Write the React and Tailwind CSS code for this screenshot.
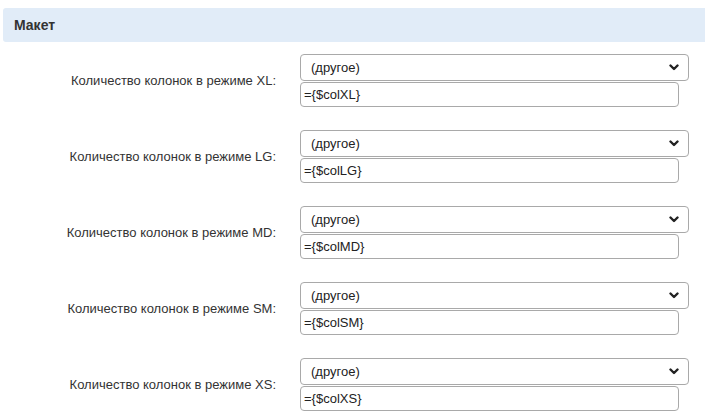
import React from "react";

const rows = ["XL", "LG", "MD", "SM", "XS"];

function Chevron() {
  return (
    <svg width="10" height="7" viewBox="0 0 10 7" className="absolute right-[9px] top-[9px]">
      <polyline points="1.5,1.5 5,5 8.5,1.5" fill="none" stroke="#222" strokeWidth="2.4" strokeLinecap="round" strokeLinejoin="round" />
    </svg>
  );
}

export default function App() {
  return (
    <div className="w-[705px] h-[417px] bg-white overflow-hidden pl-[3px] pt-[8px] text-[13px] text-[#333]" style={{ fontFamily: '"Liberation Sans", Arial, sans-serif' }}>
      <div className="h-[34px] bg-[#e1ecf8] rounded-l-[3px] flex items-center pl-[11px] font-bold text-[14px] text-[#333]">
        Макет
      </div>
      <div className="flex flex-col gap-[23px] pt-[12px]">
        {rows.map((r) => (
          <div key={r} className="flex items-center">
            <div className="w-[297px] pr-[24px] text-right leading-none">
              Количество колонок в режиме {r}:
            </div>
            <div className="flex flex-col gap-[1px]">
              <div className="relative w-[389px] h-[27px] border border-[#a9a9a9] rounded-[4px] bg-white flex items-center pl-[10px] text-[#222]">
                (другое)
                <Chevron />
              </div>
              <div className="w-[379px] h-[25px] border border-[#a9a9a9] rounded-[4px] bg-white flex items-center pl-[3px] text-[#222]">
                ={"{"}$col{r}{"}"}
              </div>
            </div>
          </div>
        ))}
      </div>
    </div>
  );
}
